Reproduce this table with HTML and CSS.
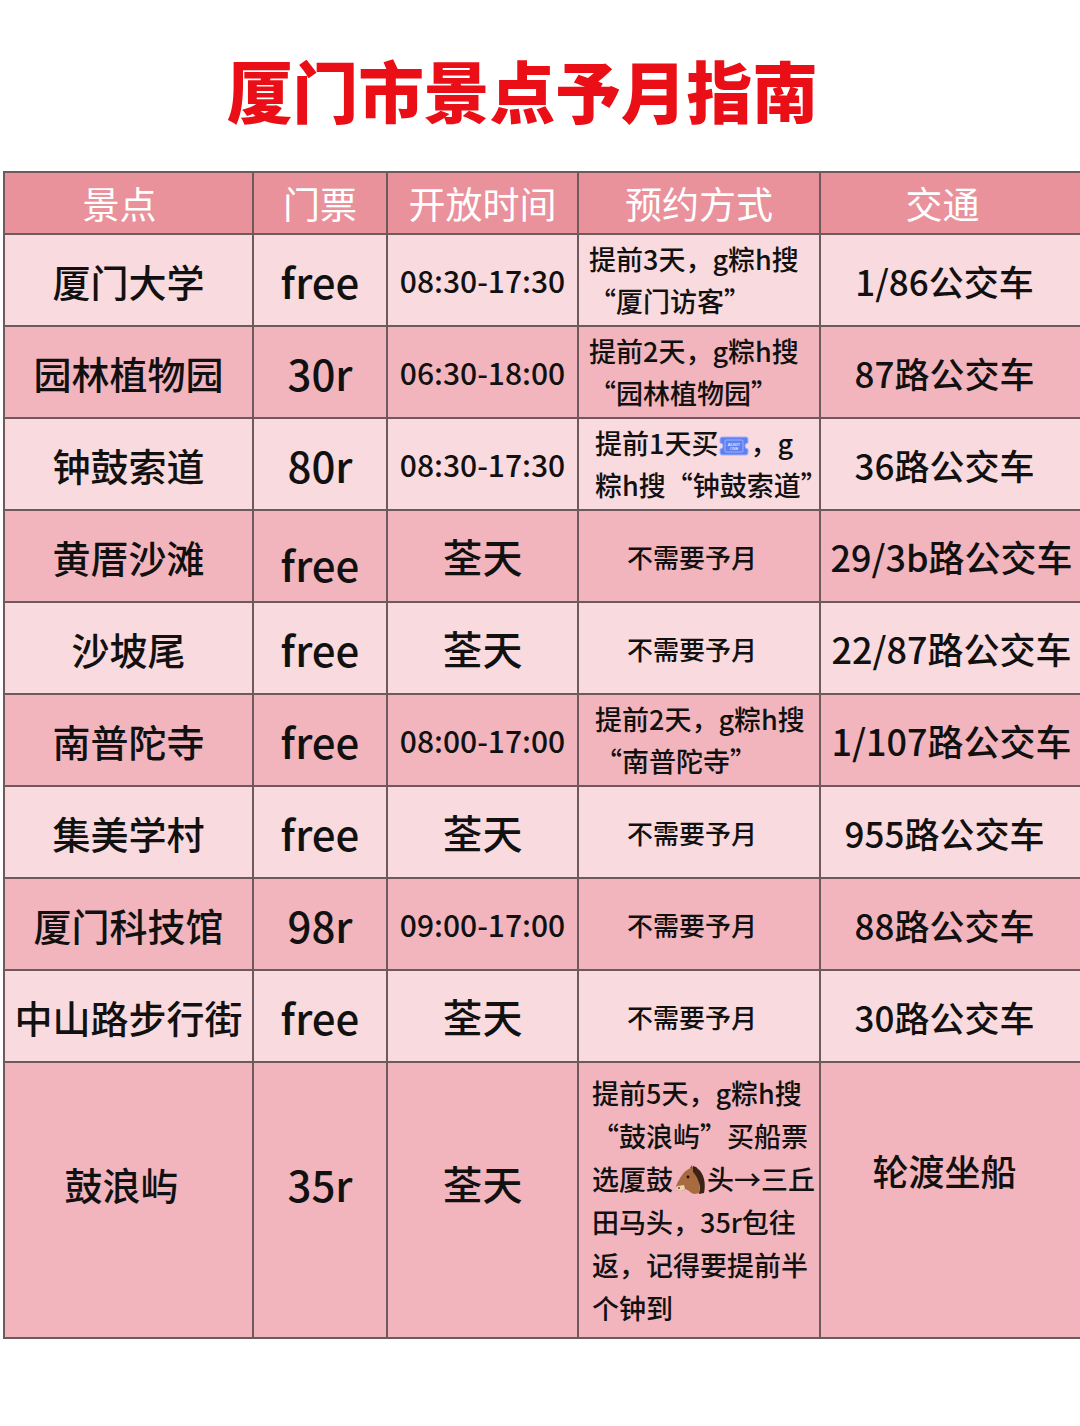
FILE: index.html
```html
<!DOCTYPE html>
<html lang="zh-CN">
<head>
<meta charset="utf-8">
<title>厦门市景点予月指南</title>
<link rel="stylesheet" href="styles.css">
</head>
<body>
<h1 class="title">厦门市景点予月指南</h1>
<div class="table">
  <div class="cell head">景点</div>
  <div class="cell head">门票</div>
  <div class="cell head">开放时间</div>
  <div class="cell head">预约方式</div>
  <div class="cell head last">交通</div>

  <div class="cell name light">厦门大学</div>
  <div class="cell price light">free</div>
  <div class="cell time light">08:30-17:30</div>
  <div class="cell book light"><p>提前3天，g粽h搜<br>“厦门访客”</p></div>
  <div class="cell bus light last">1/86公交车</div>

  <div class="cell name dark">园林植物园</div>
  <div class="cell price dark">30r</div>
  <div class="cell time dark">06:30-18:00</div>
  <div class="cell book dark"><p>提前2天，g粽h搜<br>“园林植物园”</p></div>
  <div class="cell bus dark last">87路公交车</div>

  <div class="cell name light">钟鼓索道</div>
  <div class="cell price light">80r</div>
  <div class="cell time light">08:30-17:30</div>
  <div class="cell book light indent"><p>提前1天买<svg class="ticket" viewBox="0 0 30 20" width="30" height="20" aria-hidden="true"><path d="M3 1h24a2 2 0 0 1 2 2v4a3 3 0 0 0 0 6v4a2 2 0 0 1-2 2H3a2 2 0 0 1-2-2v-4a3 3 0 0 0 0-6V3a2 2 0 0 1 2-2z" fill="#5f7ff2" stroke="#9fb3ff" stroke-width="1"/><rect x="6" y="4" width="18" height="12" rx="1" fill="none" stroke="#c9d5ff" stroke-width="0.6"/><text x="15" y="9.5" font-size="4" fill="#fff" text-anchor="middle" font-family="Liberation Sans, sans-serif">ADMIT</text><text x="15" y="14" font-size="4" fill="#fff" text-anchor="middle" font-family="Liberation Sans, sans-serif">ONE</text></svg>，g<br>粽h搜“钟鼓索道”</p></div>
  <div class="cell bus light last">36路公交车</div>

  <div class="cell name dark">黄厝沙滩</div>
  <div class="cell price dark low">free</div>
  <div class="cell time dark cn">荃天</div>
  <div class="cell book dark center">不需要予月</div>
  <div class="cell bus dark last wide">29/3b路公交车</div>

  <div class="cell name light">沙坡尾</div>
  <div class="cell price light">free</div>
  <div class="cell time light cn">荃天</div>
  <div class="cell book light center">不需要予月</div>
  <div class="cell bus light last wide">22/87路公交车</div>

  <div class="cell name dark">南普陀寺</div>
  <div class="cell price dark">free</div>
  <div class="cell time dark">08:00-17:00</div>
  <div class="cell book dark indent"><p>提前2天，g粽h搜<br>“南普陀寺”</p></div>
  <div class="cell bus dark last wide">1/107路公交车</div>

  <div class="cell name light">集美学村</div>
  <div class="cell price light">free</div>
  <div class="cell time light cn">荃天</div>
  <div class="cell book light center">不需要予月</div>
  <div class="cell bus light last">955路公交车</div>

  <div class="cell name dark">厦门科技馆</div>
  <div class="cell price dark">98r</div>
  <div class="cell time dark">09:00-17:00</div>
  <div class="cell book dark center">不需要予月</div>
  <div class="cell bus dark last">88路公交车</div>

  <div class="cell name light">中山路步行街</div>
  <div class="cell price light">free</div>
  <div class="cell time light cn">荃天</div>
  <div class="cell book light center">不需要予月</div>
  <div class="cell bus light last">30路公交车</div>

  <div class="cell name dark big">鼓浪屿</div>
  <div class="cell price dark big">35r</div>
  <div class="cell time dark cn big">荃天</div>
  <div class="cell book dark tall"><p>提前5天，g粽h搜<br>“鼓浪屿”买船票<br>选厦鼓<svg class="horse" viewBox="0 0 32 32" width="32" height="32" aria-hidden="true"><path d="M22 3c-3 0-6 1-9 3-3 2-6 6-8 10-2 3-3 6-3 8 0 2 2 3 4 3 2 0 3-1 5-2 1 0 3 1 4 2 2 2 4 3 6 3l4-1V7l-3-4z" fill="#a86a3f"/><path d="M2 24c0 2 2 3 4 3 2 0 3-1 5-2l-1-4c-2 0-4 1-6 1-1 0-2 1-2 2z" fill="#edd3b4"/><path d="M19 2l3 1 2 2c3 2 5 6 6 10 1 4 1 9 0 14l-5 1c1-5 1-10-1-14-1-3-3-6-5-8z" fill="#3b2416"/><path d="M16 4l2-3 1 4z" fill="#8a5230"/><circle cx="14" cy="13" r="1.4" fill="#1b100a"/><circle cx="5" cy="24" r="0.9" fill="#5a3a28"/></svg>头→三丘<br>田马头，35r包往<br>返，记得要提前半<br>个钟到</p></div>
  <div class="cell bus dark last big2">轮渡坐船</div>
</div>
</body>
</html>
```
FILE: styles.css
```css
* { box-sizing: border-box; }
html, body { margin: 0; padding: 0; background: #ffffff; }
body {
  width: 1080px;
  height: 1426px;
  overflow: hidden;
  font-family: "Noto Sans CJK SC", "Noto Sans", sans-serif;
  color: #111111;
}
.title {
  margin: 54px 0 0 0;
  height: 117px;
  padding: 0 36px 0 0;
  text-align: center;
  font-size: 67px;
  line-height: 70px;
  font-weight: 900;
  color: #ea0f16;
  letter-spacing: 0;
  transform: scaleX(0.98);
}
.table {
  margin-left: 3px;
  width: 1077px;
  display: grid;
  grid-template-columns: 249px 134px 191px 242px 261px;
  grid-template-rows: 62px repeat(9, 92px) 274px;
  border-top: 2px solid #6e5a5d;
  border-left: 2px solid #6e5a5d;
  border-bottom: 2px solid #6e5a5d;
}
.cell {
  display: flex;
  align-items: center;
  justify-content: center;
  border-right: 2px solid #6e5a5d;
  border-bottom: 2px solid #6e5a5d;
  text-align: center;
  white-space: nowrap;
}
.cell.last { border-right: none; }
.table > .cell:nth-last-child(-n+5) { border-bottom: none; }
.head {
  background: #e9929c;
  color: #ffffff;
  font-size: 37px;
  font-weight: 400;
  padding-top: 0;
}
.head:first-child { padding-right: 18px; }
.head.last { padding-right: 18px; }
.light { background: #f9dade; }
.dark { background: #f2b5bd; }
.name { font-size: 38px; font-weight: 500; }
.price { font-size: 42px; font-weight: 500; }
.price.low { padding-top: 14px; }
.time { font-size: 30px; font-weight: 500; }
.time.cn { font-size: 40px; }
.book { justify-content: flex-start; padding-left: 10px; font-size: 27px; font-weight: 500; }
.book p { margin: 0; text-align: left; line-height: 42px; }
.book.indent { padding-left: 16px; }
.book.center { justify-content: center; font-size: 26px; padding-left: 0; padding-right: 14px; }
.bus { font-size: 35px; font-weight: 500; padding-right: 14px; }
.bus.wide { font-size: 36px; padding-right: 0; }
.name.big { padding-bottom: 34px; padding-right: 14px; }
.big { padding-bottom: 34px; }
.big2 { font-size: 36px; padding-bottom: 60px; }
.book.tall { padding-left: 13px; padding-top: 0; }
.book.tall p { line-height: 43px; }
.ticket { vertical-align: -2px; margin: 0 1px; }
.horse { vertical-align: -6px; margin: 0 1px; }
```
